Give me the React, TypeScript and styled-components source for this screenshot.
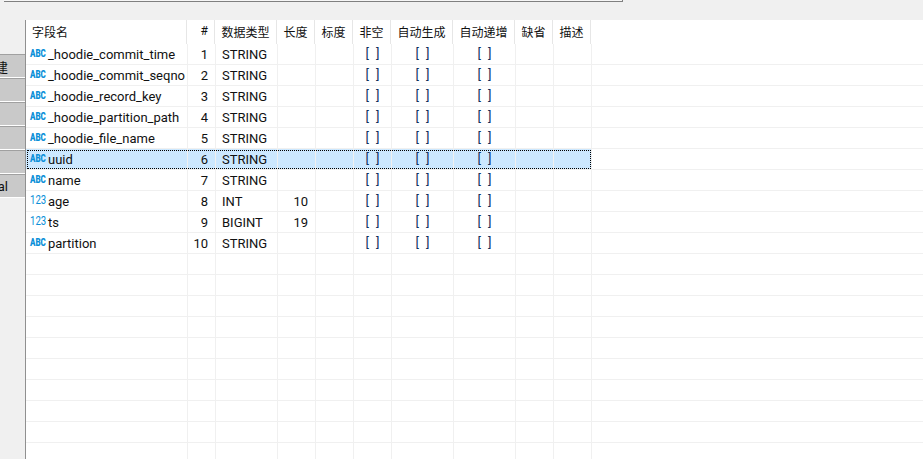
import React from 'react';
import styled, { createGlobalStyle } from 'styled-components';

const GlobalStyle = createGlobalStyle`
    html, body {
        margin: 0;
        padding: 0;
        height: 100%;
        overflow: hidden;
        background: #f0f0f0;
    }
    #root {
        height: 100%;
    }
`;

const FONT = `Roboto, "Noto Sans CJK SC", sans-serif`;

const COLUMNS = [28, 62, 38, 38, 38, 62, 62, 38, 38];

const Page = styled.div`
    width: 923px;
    height: 459px;
    display: flex;
    flex-direction: column;
    overflow: hidden;
    font-family: ${FONT};
    color: #111111;
`;

const TopStrip = styled.div`
    height: 20px;
    flex: none;
    padding-left: 4px;
    background: #f0f0f0;
`;

const TopBox = styled.div`
    width: 618px;
    height: 1px;
    background: #f6f6f6;
    border-bottom: 1px solid #808080;
    border-right: 1px solid #808080;
`;

const Body = styled.div`
    flex: 1;
    display: flex;
    min-height: 0;
`;

const Sidebar = styled.div`
    width: 25px;
    flex: none;
    display: flex;
    flex-direction: column;
    padding-top: 34px;
    background: #f0f0f0;
    overflow: hidden;
`;

const SideButton = styled.div`
    height: 22px;
    flex: none;
    display: flex;
    justify-content: flex-end;
    align-items: center;
    padding-right: 17px;
    white-space: nowrap;
    font-size: 13px;
    background: #c9c9c9;
    border-top: 1px solid #a0a0a0;
    border-bottom: 1px solid #ffffff;
    overflow: hidden;
`;

const Grid = styled.div`
    flex: 1;
    min-width: 0;
    background: #ffffff;
    border-left: 1px solid #909090;
`;

const HeaderRow = styled.div`
    height: 24px;
    display: flex;
`;

const HeaderCell = styled.div<{ $width: number; $align?: string }>`
    width: ${props => props.$width}px;
    flex: none;
    box-sizing: border-box;
    display: flex;
    align-items: center;
    justify-content: ${props => props.$align || 'center'};
    padding: 0 6px 2px;
    font-size: 12px;
    white-space: nowrap;
    border-right: 1px solid #e6e6e6;
`;

const Row = styled.div`
    height: 21px;
    box-sizing: border-box;
    display: flex;
    border-bottom: 1px solid #f0f0f0;
`;

const Selection = styled.div`
    display: flex;
    height: 20px;
    background: #cce8ff;
    position: relative;
    &::after {
        content: '';
        position: absolute;
        left: 1px;
        right: 1px;
        top: 1px;
        bottom: 0;
        border: 1px dotted #000000;
        pointer-events: none;
    }
`;

const Cell = styled.div<{ $width: number; $align?: string }>`
    width: ${props => props.$width}px;
    flex: none;
    box-sizing: border-box;
    display: flex;
    align-items: center;
    justify-content: ${props => props.$align || 'flex-start'};
    padding: 2px ${props => props.$align === 'flex-end' ? '7px' : '6px'} 0;
    font-size: 13px;
    line-height: 18px;
    white-space: nowrap;
    overflow: hidden;
    border-right: 1px solid #f0f0f0;
`;

const NameCell = styled(Cell)`
    padding: 2px 0 0 4px;
`;

const Brackets = styled.span`
    word-spacing: 4px;
    transform: translateY(-1px);
    color: #10305c;
`;

const TextIcon = styled.span`
    width: 18px;
    flex: none;
    font-size: 10px;
    font-weight: 900;
    color: #0a8fd8;
    transform-origin: left center;
    transform: translateY(-1px) scaleX(0.8);
`;

const NumberIcon = styled(TextIcon)`
    font-size: 12px;
    font-weight: 400;
    color: #0a8fd8;
    transform: translateY(-2px) scaleX(0.8);
`;

type FieldType = {
    name: string
    type: string
    length?: number
}

const fields: FieldType[] = [
    { name: '_hoodie_commit_time', type: 'STRING' },
    { name: '_hoodie_commit_seqno', type: 'STRING' },
    { name: '_hoodie_record_key', type: 'STRING' },
    { name: '_hoodie_partition_path', type: 'STRING' },
    { name: '_hoodie_file_name', type: 'STRING' },
    { name: 'uuid', type: 'STRING' },
    { name: 'name', type: 'STRING' },
    { name: 'age', type: 'INT', length: 10 },
    { name: 'ts', type: 'BIGINT', length: 19 },
    { name: 'partition', type: 'STRING' },
];

const HEADERS = ['#', '数据类型', '长度', '标度', '非空', '自动生成', '自动递增', '缺省', '描述'];
const SIDE_LABELS = ['新建', '', '', '', '', 'General'];
const EMPTY_ROWS = 10;
const NAME_WIDTH = 161;

const FieldRow: React.FC<{ field: FieldType; index: number }> = ({ field, index }) => {
    const numeric = field.type !== 'STRING';
    return (
        <>
            <NameCell $width={NAME_WIDTH + 1}>
                {numeric ? <NumberIcon>123</NumberIcon> : <TextIcon>ABC</TextIcon>}
                {field.name}
            </NameCell>
            <Cell $width={COLUMNS[0]} $align="flex-end">{index + 1}</Cell>
            <Cell $width={COLUMNS[1]}>{field.type}</Cell>
            <Cell $width={COLUMNS[2]} $align="flex-end">{field.length}</Cell>
            <Cell $width={COLUMNS[3]} />
            <Cell $width={COLUMNS[4]} $align="center"><Brackets>[ ]</Brackets></Cell>
            <Cell $width={COLUMNS[5]} $align="center"><Brackets>[ ]</Brackets></Cell>
            <Cell $width={COLUMNS[6]} $align="center"><Brackets>[ ]</Brackets></Cell>
            <Cell $width={COLUMNS[7]} />
            <Cell $width={COLUMNS[8]} />
        </>
    );
};

const App: React.FC = () => {
    return (
        <Page>
            <GlobalStyle />
            <TopStrip>
                <TopBox />
            </TopStrip>
            <Body>
                <Sidebar>
                    {SIDE_LABELS.map((label, i) => (
                        <SideButton key={i}>{label}</SideButton>
                    ))}
                </Sidebar>
                <Grid>
                    <HeaderRow>
                        <HeaderCell $width={NAME_WIDTH} $align="flex-start">字段名</HeaderCell>
                        {HEADERS.map((title, i) => (
                            <HeaderCell key={title} $width={COLUMNS[i]} $align={i === 0 ? 'flex-end' : 'center'}>
                                {title}
                            </HeaderCell>
                        ))}
                    </HeaderRow>
                    {fields.map((field, i) => (
                        <Row key={field.name}>
                            {field.name === 'uuid'
                                ? <Selection><FieldRow field={field} index={i} /></Selection>
                                : <FieldRow field={field} index={i} />}
                        </Row>
                    ))}
                    {Array.from({ length: EMPTY_ROWS }, (_, i) => (
                        <Row key={i}>
                            <Cell $width={NAME_WIDTH + 1} />
                            {COLUMNS.map((w, j) => <Cell key={j} $width={w} />)}
                        </Row>
                    ))}
                </Grid>
            </Body>
        </Page>
    );
};

export default App;
